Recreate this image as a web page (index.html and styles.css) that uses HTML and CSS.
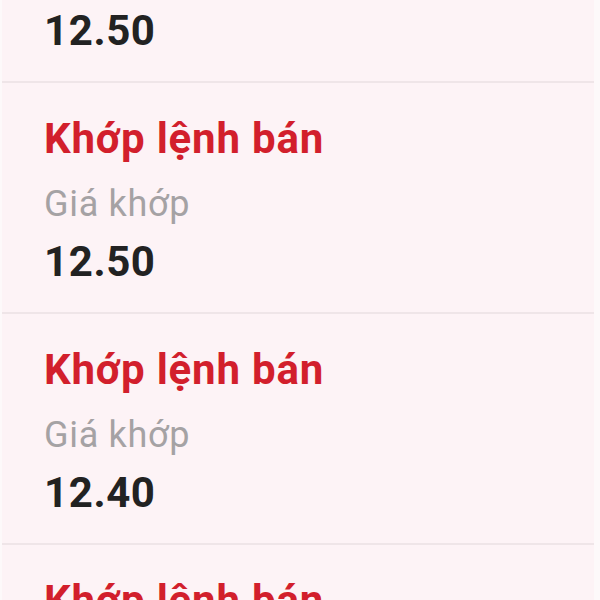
FILE: index.html
```html
<!DOCTYPE html>
<html lang="vi">
<head>
<meta charset="utf-8">
<meta name="viewport" content="width=device-width, initial-scale=1.0">
<title>Lịch sử khớp lệnh</title>
<link rel="stylesheet" href="styles.css">
</head>
<body>
<div class="list">
  <div class="item">
    <div class="title">Khớp lệnh bán</div>
    <div class="label">Giá khớp</div>
    <div class="value">12.50</div>
  </div>
  <div class="item">
    <div class="title">Khớp lệnh bán</div>
    <div class="label">Giá khớp</div>
    <div class="value">12.50</div>
  </div>
  <div class="item">
    <div class="title">Khớp lệnh bán</div>
    <div class="label">Giá khớp</div>
    <div class="value">12.40</div>
  </div>
  <div class="item">
    <div class="title">Khớp lệnh bán</div>
    <div class="label">Giá khớp</div>
    <div class="value">12.40</div>
  </div>
</div>
</body>
</html>
```

FILE: styles.css
```css
body {
  margin: 0;
  background: #fdf9fa;
  font-family: Roboto, "Noto Sans", sans-serif;
  overflow: hidden;
}
.list {
  margin: -148px 6px 0 2px;
  background: #fdf3f6;
}
.item {
  padding: 31px 0 25px 42px;
  border-bottom: 2px solid #efe5e8;
}
.title {
  font-size: 42px;
  line-height: 50px;
  font-weight: 700;
  letter-spacing: 0.8px;
  color: #d21f2c;
}
.label {
  margin-top: 18px;
  font-size: 36px;
  line-height: 44px;
  letter-spacing: 0.7px;
  color: #a5a2a4;
}
.value {
  margin-top: 11px;
  font-size: 42px;
  line-height: 50px;
  font-weight: 700;
  letter-spacing: 0.6px;
  color: #222222;
}
```
